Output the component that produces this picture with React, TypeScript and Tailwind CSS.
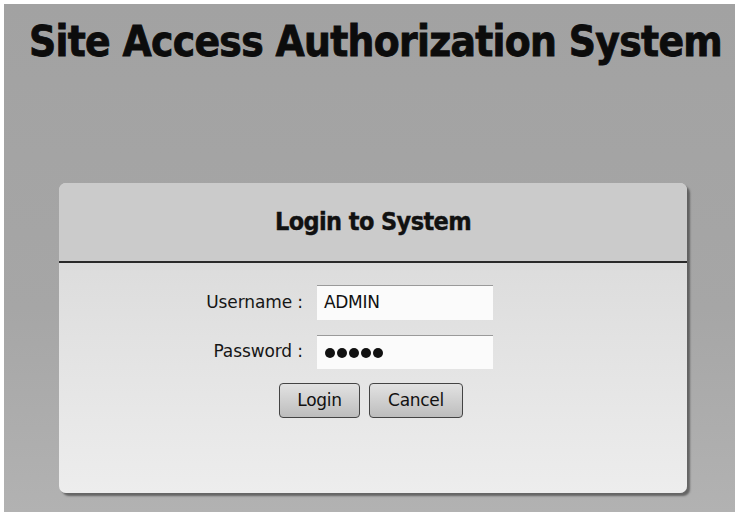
import React from "react";

const sans = { fontFamily: '"DejaVu Sans", Verdana, sans-serif' };
const condensed = { fontFamily: '"DejaVu Sans Condensed", "DejaVu Sans", Verdana, sans-serif', fontStretch: "condensed" as const };

export default function App() {
  return (
    <div className="w-[735px] h-[521px] bg-white pt-[4px] pl-[4px] pb-[9px]" style={sans}>
      <div className="h-full flex flex-col bg-[linear-gradient(180deg,#a2a2a2_0%,#a6a6a6_60%,#b2b2b2_100%)]">
        <h1
          className="pl-[25px] pt-[14px] text-[42px] leading-[48px] font-bold text-[#0c0c0c] tracking-[-0.7px] whitespace-nowrap [-webkit-text-stroke:0.8px_#0c0c0c]"
          style={condensed}
        >
          Site Access Authorization System
        </h1>

        <div className="ml-[55px] mt-[117px] w-[628px] h-[310px] rounded-[7px] overflow-hidden flex flex-col shadow-[3px_3px_2px_rgba(40,40,40,0.55)] bg-[linear-gradient(180deg,#d6d6d6_0%,#e2e2e2_50%,#ededed_100%)]">
          <div className="h-[80px] flex items-center justify-center bg-[#cbcbcb] border-b-2 border-[#2a2a2a]">
            <span
              className="text-[25px] font-bold text-[#111] tracking-[-0.6px] mt-[0px] [-webkit-text-stroke:0.4px_#111]"
              style={condensed}
            >
              Login to System
            </span>
          </div>

          <div className="pt-[22px] pl-[124px]">
            <div className="grid grid-cols-[120px_176px] gap-x-[14px] gap-y-[15px] items-center">
              <label className="text-right text-[17px] text-[#161616] tracking-[-0.1px]">Username :</label>
              <div className="h-[35px] bg-[#fbfbfb] border-t border-[#9a9a9a] flex items-center px-[7px] text-[17px] text-[#111] tracking-[-0.3px]">
                ADMIN
              </div>
              <label className="text-right text-[17px] text-[#161616] tracking-[-0.1px]">Password :</label>
              <div className="h-[34px] bg-[#fbfbfb] border-t border-[#9a9a9a] flex items-center px-[8px] gap-[2px]">
                {[0, 1, 2, 3, 4].map((i) => (
                  <span key={i} className="w-[10px] h-[10px] rounded-full bg-[#111]" />
                ))}
              </div>
            </div>

            <div className="flex gap-[9px] mt-[14px] ml-[96px]">
              <button className="w-[81px] h-[35px] rounded-[4px] border-[1.5px] border-[#444] bg-[linear-gradient(180deg,#e2e2e2,#bdbdbd)] text-[17px] text-[#111] tracking-[-0.3px]">
                Login
              </button>
              <button className="w-[94px] h-[35px] rounded-[4px] border-[1.5px] border-[#444] bg-[linear-gradient(180deg,#e2e2e2,#bdbdbd)] text-[17px] text-[#111] tracking-[-0.3px]">
                Cancel
              </button>
            </div>
          </div>
        </div>
      </div>
    </div>
  );
}
